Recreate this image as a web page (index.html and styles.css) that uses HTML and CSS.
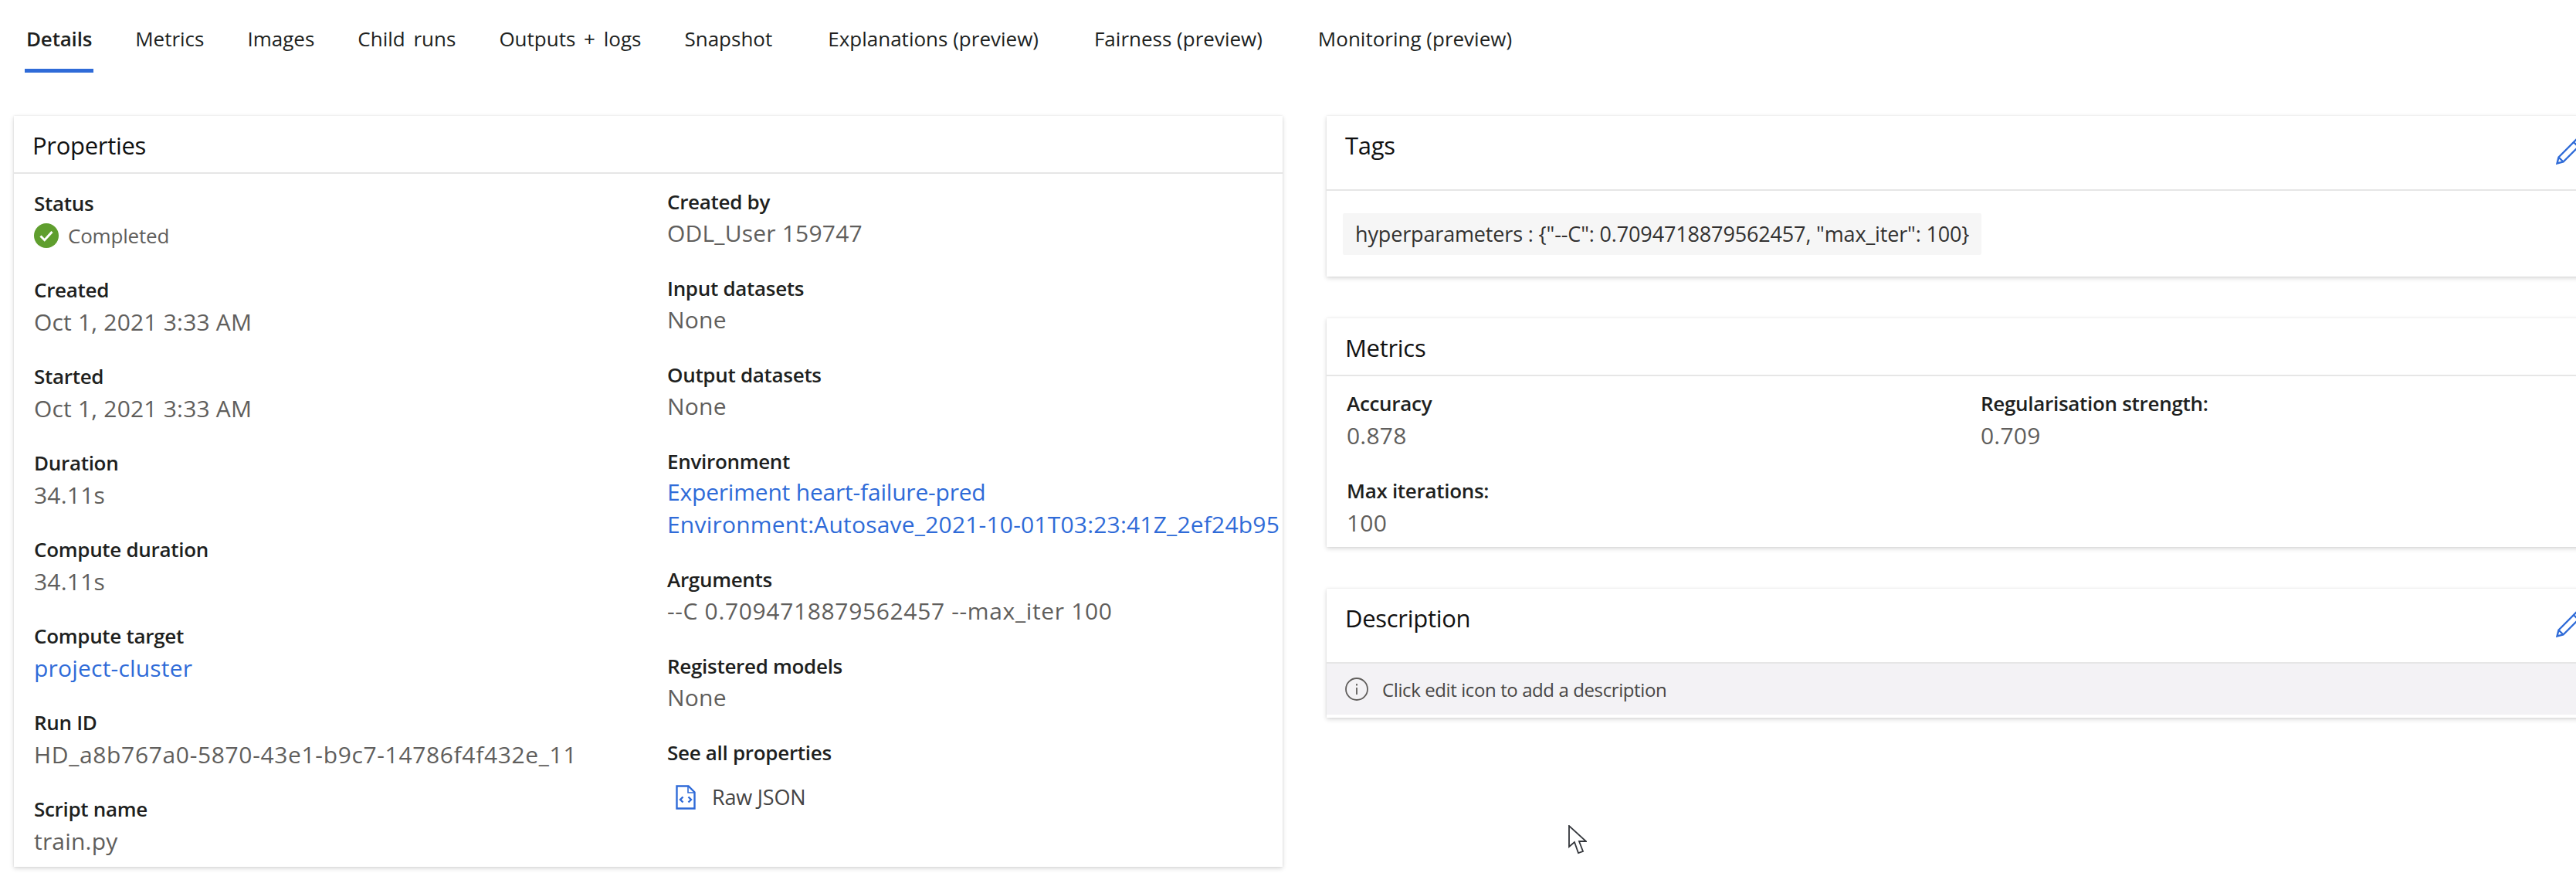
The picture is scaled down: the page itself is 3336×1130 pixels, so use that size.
FILE: index.html
```html
<!DOCTYPE html>
<html lang="en">
<head>
<meta charset="utf-8">
<title>Run details</title>
<link rel="stylesheet" href="styles.css">
</head>
<body>
<div class="page">
  <nav class="tabs">
    <span class="tab tab-active">Details</span>
    <span class="tab">Metrics</span>
    <span class="tab">Images</span>
    <span class="tab">Child runs</span>
    <span class="tab">Outputs + logs</span>
    <span class="tab">Snapshot</span>
    <span class="tab tab-wide">Explanations (preview)</span>
    <span class="tab tab-wide">Fairness (preview)</span>
    <span class="tab tab-wide">Monitoring (preview)</span>
  </nav>
  <main class="columns">
    <section class="card">
      <h2 class="card-head">Properties</h2>
      <div class="prop-grid">
        <div class="prop-col prop-col-main">
          <div class="prop"><div class="label">Status</div>
            <div class="status">
              <svg class="status-icon" viewBox="0 0 32 32"><circle cx="16" cy="16" r="16" fill="#5f9e2e"/><path d="M8.5 16.5l5.2 5.2L23.5 11" fill="none" stroke="#fff" stroke-width="3"/></svg>
              <span>Completed</span>
            </div>
          </div>
          <div class="prop"><div class="label">Created</div><div class="value">Oct 1, 2021 3:33 AM</div></div>
          <div class="prop"><div class="label">Started</div><div class="value">Oct 1, 2021 3:33 AM</div></div>
          <div class="prop"><div class="label">Duration</div><div class="value">34.11s</div></div>
          <div class="prop"><div class="label">Compute duration</div><div class="value">34.11s</div></div>
          <div class="prop"><div class="label">Compute target</div><div class="value link">project-cluster</div></div>
          <div class="prop"><div class="label">Run ID</div><div class="value value-digits">HD_a8b767a0-5870-43e1-b9c7-14786f4f432e_11</div></div>
          <div class="prop"><div class="label">Script name</div><div class="value">train.py</div></div>
        </div>
        <div class="prop-col prop-col-alt">
          <div class="prop"><div class="label">Created by</div><div class="value">ODL_User 159747</div></div>
          <div class="prop"><div class="label">Input datasets</div><div class="value">None</div></div>
          <div class="prop"><div class="label">Output datasets</div><div class="value">None</div></div>
          <div class="prop"><div class="label">Environment</div><div class="value value-multi link"><span class="value-tight">Experiment heart-failure-pred</span><br>Environment:Autosave_2021-10-01T03:23:41Z_2ef24b95</div></div>
          <div class="prop"><div class="label">Arguments</div><div class="value value-digits">--C 0.7094718879562457 --max_iter 100</div></div>
          <div class="prop"><div class="label">Registered models</div><div class="value">None</div></div>
          <div class="prop"><div class="label">See all properties</div>
            <div class="raw">
              <svg class="raw-icon" viewBox="0 0 26 32"><path d="M1.5 1.5h15l8 8v21h-23z" fill="#fff" stroke="#2f6bd8" stroke-width="2.4"/><path d="M16 2v8h8" fill="none" stroke="#2f6bd8" stroke-width="1.6"/><path d="M9.5 15.5l-3.5 3.5 3.5 3.5M16.5 15.5l3.5 3.5-3.5 3.5" fill="none" stroke="#2f6bd8" stroke-width="2.4"/></svg>
              <span>Raw JSON</span>
            </div>
          </div>
        </div>
      </div>
    </section>
    <div class="side">
      <section class="card">
        <h2 class="card-head card-head-tall">Tags
          <svg class="pencil" viewBox="0 0 36 36"><path d="M1.5 34.5l2-8L26 4l6 6L9.5 32.500zM3.500 26.500l6 6M23 7l6 6" fill="none" stroke="#2f6bd8" stroke-width="2.400"/></svg>
        </h2>
        <div class="tag-body"><span class="chip">hyperparameters : {"--C": 0.7094718879562457, "max_iter": 100}</span></div>
      </section>
      <section class="card">
        <h2 class="card-head">Metrics</h2>
        <div class="metric-grid">
          <div class="metric"><div class="label">Accuracy</div><div class="value">0.878</div></div>
          <div class="metric"><div class="label">Regularisation strength:</div><div class="value">0.709</div></div>
          <div class="metric"><div class="label">Max iterations:</div><div class="value">100</div></div>
        </div>
      </section>
      <section class="card">
        <h2 class="card-head card-head-tall">Description
          <svg class="pencil" viewBox="0 0 36 36"><path d="M1.5 34.5l2-8L26 4l6 6L9.5 32.500zM3.500 26.500l6 6M23 7l6 6" fill="none" stroke="#2f6bd8" stroke-width="2.400"/></svg>
        </h2>
        <div class="notice">
          <svg class="info-icon" viewBox="0 0 30 30"><circle cx="15" cy="15" r="14" fill="none" stroke="#605e5c" stroke-width="1.800"/><path d="M15 13v9M15 8v2.400" stroke="#605e5c" stroke-width="1.800"/></svg>
          <span>Click edit icon to add a description</span>
        </div>
      </section>
    </div>
  </main>
</div>
<svg class="cursor" viewBox="0 0 24 38"><path d="M1 1v27l7-6 5 14 6-2-5-13h9z" fill="#fff" stroke="#33363b" stroke-width="1.800"/></svg>
</body>
</html>
```
FILE: styles.css
```css
* { box-sizing: border-box; }
html, body { margin: 0; height: 1130px; overflow: hidden; background: #fff; }
body { font-family: "Open Sans", "Noto Sans", sans-serif; color: #201f1e; }
.page { width: 3380px; padding: 0 0 0 18px; }
.tabs { display: flex; gap: 56px; height: 94px; padding: 30px 0 0 16px; font-size: 26px; line-height: 40px; word-spacing: 4px; }
.tab { height: 64px; white-space: nowrap; }
.tab-active { font-weight: 600; border-bottom: 5px solid #2f6bd8; padding: 0 2px; margin: 0 -2px; letter-spacing: -0.2px; }
.tab-wide { margin-left: 16px; word-spacing: 0; }
.columns { display: grid; grid-template-columns: 1643px 1643px; gap: 57px; margin-top: 56px; align-items: start; }
.side { display: flex; flex-direction: column; gap: 54px; }
.card { background: #fff; box-shadow: 0 2px 6px rgba(0,0,0,.16), 0 0 2px rgba(0,0,0,.08); overflow: hidden; }
.card-head { display: flex; justify-content: space-between; margin: 0; height: 75px; padding: 17px 26px 0 24px; border-bottom: 2px solid #e6e6e6; font-size: 31px; font-weight: 500; line-height: 42px; letter-spacing: -0.3px; color: #111; }
.card-head-tall { height: 97px; }
.pencil { position: absolute; left: 3310px; width: 36px; height: 36px; margin-top: 10px; }
.prop-grid { display: grid; grid-template-columns: 820px 1fr; padding: 16px 0 0 26px; height: 897px; }
.prop-col { min-width: 0; }
.prop-col-main { padding-top: 2px; }
.prop-col-main .prop { margin-bottom: 29px; }
.prop-col-main .value { margin-top: 1px; }
.prop-col-alt .prop { margin-bottom: 30px; }
.prop-col-alt .value { margin-top: 0; }
.prop-col-alt .value-multi { margin-top: -1px; }
.label { font-size: 26px; line-height: 40px; font-weight: 600; letter-spacing: -0.3px; color: #201f1e; white-space: nowrap; }
.value { margin-top: 1px; font-size: 30px; line-height: 42px; color: #605e5c; letter-spacing: 0.2px; white-space: nowrap; }
.value-digits { letter-spacing: 0.65px; }
.value-tight { letter-spacing: -0.2px; }
.link { color: #2f6bd8; }
.status { display: flex; align-items: center; gap: 12px; height: 42px; margin-top: 1px; font-size: 26px; color: #605e5c; letter-spacing: -0.2px; }
.status-icon { width: 32px; height: 32px; flex: none; }
.raw { display: flex; align-items: center; gap: 21px; padding: 19px 0 0 11px; font-size: 27px; color: #444; letter-spacing: -0.2px; }
.raw-icon { width: 26px; height: 32px; flex: none; }
.tag-body { height: 111px; padding: 29px 0 0 21px; }
.chip { display: inline-block; height: 54px; padding: 0 16px; background: #f6f6f6; border-radius: 2px; font-size: 27px; line-height: 54px; letter-spacing: -0.15px; color: #323130; }
.metric-grid { display: grid; grid-template-columns: 821px 1fr; align-content: start; row-gap: 30px; padding: 15px 0 0 26px; height: 221px; }
.notice { display: flex; align-items: center; gap: 18px; height: 70px; padding: 0 0 4px 24px; background: linear-gradient(#f3f2f5 66px, #fff 66px); font-size: 24px; letter-spacing: -0.4px; color: #484644; }
.info-icon { width: 30px; height: 30px; flex: none; }
.cursor { position: absolute; left: 2031px; top: 1068px; width: 24px; height: 38px; }
```
